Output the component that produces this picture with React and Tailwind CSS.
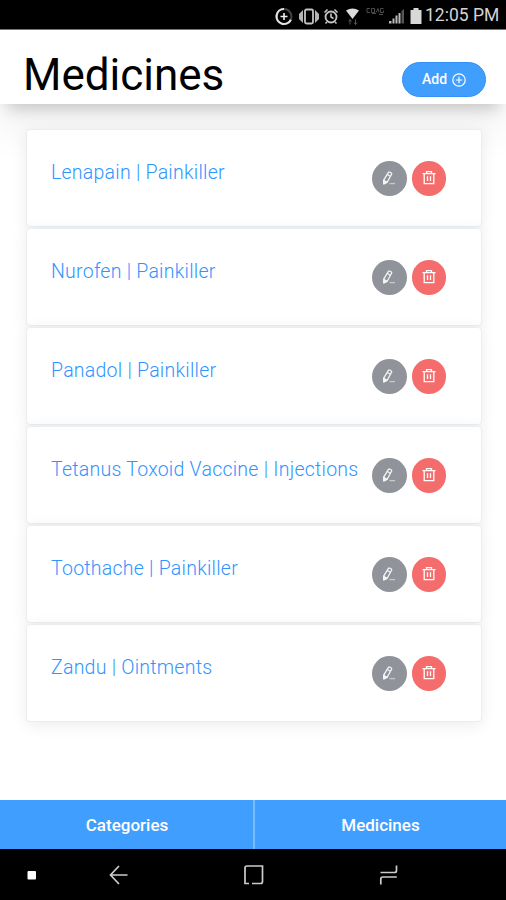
import React from 'react'

const medicines = [
  { name: 'Lenapain', category: 'Painkiller' },
  { name: 'Nurofen', category: 'Painkiller' },
  { name: 'Panadol', category: 'Painkiller' },
  { name: 'Tetanus Toxoid Vaccine', category: 'Injections' },
  { name: 'Toothache', category: 'Painkiller' },
  { name: 'Zandu', category: 'Ointments' },
]

function StatusBar() {
  return (
    <div className="h-[30px] shrink-0 bg-black border-b border-[#777] flex items-center justify-end pr-2 pt-[3px] text-[#d4d4d4]">
      <svg width="150" height="24" viewBox="274 3 150 24" fill="none" stroke="currentColor">
        <circle cx="284" cy="15.500" r="7.500" stroke="#444" strokeWidth="2" />
        <path d="M284 8a7.500 7.500 0 1 0 6.800 10.700" stroke="#e5e5e5" strokeWidth="2.200" />
        <path d="M284 12v7M280.500 15.500h7" stroke="#eee" strokeWidth="1.600" />
        <rect x="305" y="8.500" width="8" height="14" rx="1.500" stroke="#c4c4c4" strokeWidth="1.800" />
        <path d="M303 9v13l-4-4v-5zM315 9v13l4-4v-5z" fill="#b5b5b5" stroke="none" />
        <circle cx="331" cy="16" r="5.500" stroke="#c4c4c4" strokeWidth="1.800" />
        <path d="M331 12.500V16l2.500 1.500M324.500 11.500l3-3M337.500 11.500l-3-3M327 21l-1.500 1.500M335 21l1.500 1.500" stroke="#c4c4c4" strokeWidth="1.600" />
        <path d="M346 9.500q6.500-4 13 0l-6.500 8.500z" fill="#ddd" stroke="none" />
        <path d="M350 18.500v5M348.500 20.500l1.500-2 1.500 2M355.500 18.500v5M354 21.500l1.500 2 1.500-2" stroke="#555" />
        <path d="M370 7.500h-3v4h3M371.500 11.500v-4h3v4zM376 11.500l2-4 1 4M383.500 7.500h-3v4h3v-2M372 12.500h4M379 13.500h4" stroke="#4a4a4a" />
        <path d="M389 22.500v-2.500h2.500v2.500zM392.500 22.500v-5h2v5zM395.500 22.500v-8h2v8zM398.500 22.500v-10.500h2v10.500z" fill="#bbb" stroke="none" />
        <path d="M401.500 22.500V10l2.500-2v14.500z" fill="#555" stroke="none" />
        <path d="M413.500 7h5v2h3v14h-11V9h3z" fill="#d8d8d8" stroke="none" />
      </svg>
      <span className="ml-px text-[17.500px] leading-none w-[73px] whitespace-nowrap">12:05 PM</span>
    </div>
  )
}

function Header() {
  return (
    <header className="h-[74px] shrink-0 bg-white pl-[23px] pr-5 flex justify-between shadow-[0_11px_15px_-7px_rgba(0,0,0,0.2),0_24px_38px_3px_rgba(0,0,0,0.055)]">
      <h1 className="text-[44px] leading-[52px] pt-[19px] text-black">Medicines</h1>
      <button className="mt-8 h-[35px] w-[84px] rounded-full bg-[#409eff] border border-[#3391f5] text-white text-[14px] font-medium flex items-center justify-center gap-[5px]">
        Add
        <svg width="14" height="14" viewBox="0 0 14 14" fill="none" stroke="currentColor" strokeWidth="1.200">
          <circle cx="7" cy="7" r="6.200" />
          <path d="M7 3.800v6.400M3.800 7h6.400" />
        </svg>
      </button>
    </header>
  )
}

function EditIcon() {
  return (
    <svg width="16" height="16" viewBox="0 0 16 16" fill="none" stroke="#f4f4f5" strokeWidth="1.300" strokeLinejoin="round">
      <path d="M7.600 2.200q2.200-.6 3.200 1.600l-4.300 8-3.800 2 .1-3.900z" />
      <path d="M6.300 4.500l3 1.800M2.700 10.200l3.300 2.200-3.300 1.400z" fill="#f4f4f5" />
      <path d="M8.500 13.600h5.500" stroke="#c8c9cc" />
    </svg>
  )
}

function TrashIcon() {
  return (
    <svg width="16" height="16" viewBox="0 0 16 16" fill="none" stroke="#fff" strokeWidth="1.300">
      <path d="M1.500 3.700h13M5.500 3.500V1.700h5v1.800M3.200 3.700v10h9.600v-10M6.500 6.300v4.700M9.500 6.300v4.700" />
    </svg>
  )
}

function MedicineCard({ name, category }) {
  return (
    <li className="h-[98px] rounded-[4px] bg-white border border-[#ebeef0] pl-6 pr-[35px] flex justify-between shadow-[0_3px_16px_rgba(0,0,0,0.08)]">
      <span className="pt-[30px] text-[19.500px] leading-[26px] tracking-[0.250px] font-light text-[#2f94ff] whitespace-nowrap">
        {name} | {category}
      </span>
      <div className="pt-[31px] flex gap-[5px]">
        <button aria-label="Edit" className="size-[34.500px] rounded-full bg-[#909399] flex items-center justify-center">
          <EditIcon />
        </button>
        <button aria-label="Delete" className="size-[34.500px] rounded-full bg-[#f56c6c] flex items-center justify-center">
          <TrashIcon />
        </button>
      </div>
    </li>
  )
}

function TabBar() {
  return (
    <nav className="h-[49px] shrink-0 bg-[#409eff] text-white text-[17px] font-medium flex">
      <button className="w-[255px] border-r-2 border-[#79bbff] pl-px pt-0.5">Categories</button>
      <button className="flex-1 pt-0.5">Medicines</button>
    </nav>
  )
}

function SystemNav() {
  return (
    <div className="h-[51px] shrink-0 bg-black">
      <svg width="506" height="51" viewBox="0 849 506 51" fill="none" stroke="#ccc" strokeWidth="1.700">
        <rect x="27.500" y="871" width="8.500" height="8.500" rx="1" fill="#fff" stroke="none" />
        <path d="M127.500 875H110.500M119 866l-8.500 9 8.500 9" />
        <path d="M249 883.500h-4V868q0-2 2-2h15.500v15.500q0 2-2 2H252" />
        <path d="M380.500 872.500h14q2 0 2-2V865.500M396.800 877h-14q-2 0-2 2v5.500" />
      </svg>
    </div>
  )
}

export default function App() {
  return (
    <div className="w-[506px] h-[900px] bg-white flex flex-col overflow-hidden font-['Roboto',sans-serif]">
      <StatusBar />
      <Header />
      <main className="flex-1 pl-[26px] pr-6 pt-[25px]">
        <ul className="flex flex-col gap-px">
          {medicines.map((m) => (
            <MedicineCard key={m.name} {...m} />
          ))}
        </ul>
      </main>
      <TabBar />
      <SystemNav />
    </div>
  )
}
